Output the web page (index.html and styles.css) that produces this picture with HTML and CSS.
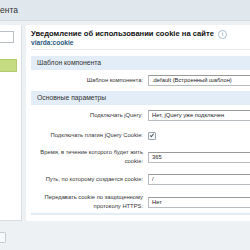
FILE: index.html
```html
<!DOCTYPE html>
<html lang="ru">
<head>
    <meta charset="UTF-8">
    <title>Параметры компонента</title>
    <link rel="stylesheet" href="styles.css">
</head>
<body>

<header class="topbar">ента</header>

<section class="layout">
    <!-- Left side - menu -->
    <aside class="side">
        <div class="side-input"></div>
        <div class="side-btn"></div>
    </aside>

    <!-- Right side - component params -->
    <div class="main">
        <div class="title">
            <h1>Уведомление об использовании cookie на сайте <span class="info">i</span></h1>
            <div class="code">viarda:cookie</div>
        </div>

        <div class="group">Шаблон компонента</div>
        <div class="row">
            <label>Шаблон компонента:</label>
            <div class="field"><span class="input">.default (Встроенный шаблон)</span></div>
        </div>

        <div class="group">Основные параметры</div>
        <div class="row">
            <label>Подключать jQuery:</label>
            <div class="field"><span class="input">Нет, jQuery уже подключен</span></div>
        </div>
        <div class="row row-check">
            <label>Подключать плагин jQuery Cookie:</label>
            <div class="field"><span class="check"></span></div>
        </div>
        <div class="row">
            <label>Время, в течение которого будет жить<br>cookie:</label>
            <div class="field"><span class="input">365</span></div>
        </div>
        <div class="row">
            <label>Путь, по которому создается cookie:</label>
            <div class="field"><span class="input">/</span></div>
        </div>
        <div class="row row-last">
            <label>Передавать cookie по защищенному<br>протоколу HTTPS:</label>
            <div class="field"><span class="input">Нет</span></div>
        </div>
    </div>
</section>

<footer class="bottom">
    <span class="bottom-btn"></span>
</footer>

</body>
</html>
```

FILE: styles.css
```css
body {
    margin: 0;
    padding: 0;
    font-family: 'Liberation Sans', Arial, sans-serif;
    background-color: #edf1f4;
    color: #222;
    overflow: hidden;
}

.topbar {
    height: 20px;
    line-height: 20px;
    background-color: #e0e8ed;
    border-bottom: 1px solid #d5dde3;
    font-size: 8.5px;
    color: #333;
}

.layout {
    display: flex;
    align-items: flex-start;
    gap: 4px;
    padding-top: 4px;
}

/* Left side */
.side {
    width: 21px;
    height: 189px;
    background-color: #fff;
    border-right: 1px solid #d8dfe4;
    border-bottom: 1px solid #d8dfe4;
    padding-top: 6px;
}

.side-input {
    width: 13px;
    height: 10px;
    border: 1px solid #b9c0c6;
    border-left: none;
    background-color: #fff;
}

.side-btn {
    width: 16px;
    height: 11px;
    margin-top: 16px;
    background-color: #c6dc82;
    border: 1px solid #b3cb6c;
    border-left: none;
}

/* Right side */
.main {
    flex: 1;
    min-width: 0;
    overflow: hidden;
    background-color: #fff;
    padding: 4px 0 6px 5px;
}

.title {
    border-bottom: 1px solid #e3e9ee;
    padding-bottom: 2px;
    margin-bottom: 6px;
}

.title h1 {
    margin: 0;
    font-size: 7.6px;
    line-height: 10px;
    font-weight: bold;
    color: #111;
}

.info {
    display: inline-block;
    width: 7px;
    height: 7px;
    border: 1px solid #a9bfd3;
    border-radius: 50%;
    font-size: 5px;
    line-height: 7px;
    text-align: center;
    color: #4c7aa5;
    vertical-align: middle;
    margin-left: 2px;
    font-weight: normal;
}

.code {
    font-size: 6.6px;
    line-height: 8px;
    color: #2c5a80;
    font-weight: bold;
}

.group {
    height: 14px;
    line-height: 14px;
    background-color: #e3edf7;
    padding-left: 6px;
    font-size: 6.8px;
    color: #333;
}

.row {
    display: grid;
    grid-template-columns: 112px 1fr;
    gap: 5px;
    align-items: center;
    padding: 3px 0;
}

.row label {
    text-align: right;
    font-size: 5.8px;
    line-height: 9px;
    color: #333;
}

.field {
    min-height: 15px;
    display: flex;
    align-items: center;
}

.row-check .field {
    min-height: 13px;
}

.row-last {
    border-bottom: 2px solid #e3edf5;
    padding-bottom: 2px;
}

.input {
    display: block;
    width: 120px;
    height: 9px;
    line-height: 9px;
    padding-left: 3px;
    border: 1px solid #b7bcc0;
    border-top-color: #999;
    font-size: 5.8px;
    color: #222;
    white-space: nowrap;
}

.check {
    width: 6px;
    height: 6px;
    border: 1px solid #9aa4ac;
    border-radius: 1px;
    background-color: #f7f8f9;
    position: relative;
}

.check::after {
    content: "";
    position: absolute;
    left: 2px;
    top: 0;
    width: 1px;
    height: 3px;
    border-right: 1px solid #555;
    border-bottom: 1px solid #555;
    transform: rotate(40deg);
}

.bottom {
    padding-top: 11px;
}

.bottom-btn {
    display: block;
    width: 5px;
    height: 9px;
    background-color: #f6f8f9;
    border: 1px solid #c5cdd3;
    border-left: none;
    border-radius: 0 2px 2px 0;
}
```
